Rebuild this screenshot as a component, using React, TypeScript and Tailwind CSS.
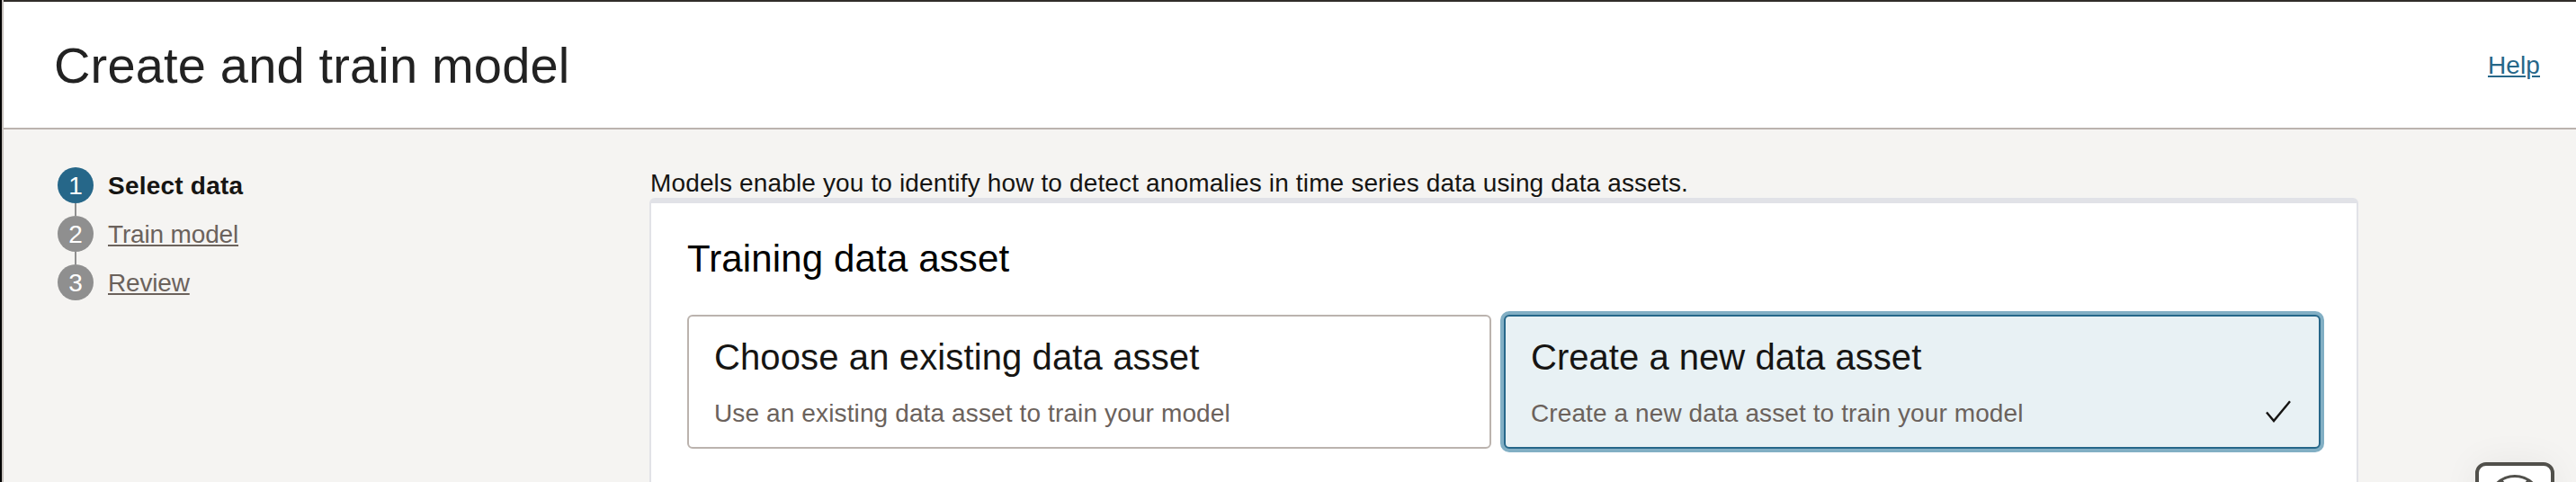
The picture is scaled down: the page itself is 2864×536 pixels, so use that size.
const FONT = "font-['Liberation_Sans',Arial,sans-serif]";

function Steps() {
  return (
    <ol className="ml-[60px] mt-[42px] flex w-[658px] flex-none flex-col text-[28px] leading-[40px]">
      <li className="flex h-[40px] items-center gap-[16px]">
        <span className="flex size-[40px] items-center justify-center rounded-full bg-[#266789] pt-[2px] text-white">1</span>
        <span className="pt-[2px] font-bold tracking-[0.22px] text-[#161513]">Select data</span>
      </li>
      <li className="ml-[19px] h-[14px] w-[2px] bg-[#8f8f8f]" />
      <li className="flex h-[40px] items-center gap-[16px]">
        <span className="flex size-[40px] items-center justify-center rounded-full bg-[#8f8f8f] pt-[2px] text-white">2</span>
        <a className="pt-[2px] tracking-[-0.16px] text-[#6b625c] underline decoration-2 underline-offset-[2px]">Train model</a>
      </li>
      <li className="ml-[19px] h-[14px] w-[2px] bg-[#8f8f8f]" />
      <li className="flex h-[40px] items-center gap-[16px]">
        <span className="flex size-[40px] items-center justify-center rounded-full bg-[#8f8f8f] pt-[2px] text-white">3</span>
        <a className="pt-[2px] tracking-[-0.18px] text-[#6b625c] underline decoration-2 underline-offset-[2px]">Review</a>
      </li>
    </ol>
  );
}

export default function App() {
  return (
    <div className={`flex h-[536px] w-[2864px] overflow-hidden bg-[#f5f4f2] ${FONT}`}>
      <div className="w-[2px] flex-none bg-black" />
      <div className="w-[2px] flex-none bg-[#c4bfbb]" />
      <div className="relative flex min-w-0 flex-1 flex-col">
        <header className="flex h-[144px] flex-none items-center justify-between border-b-2 border-t-2 border-b-[#bbb3ae] border-t-[#312d2a] bg-white pl-[56px] pr-[40px] pt-[2px]">
          <h1 className="text-[56px] leading-[64px] tracking-[0.17px] text-[#222]">Create and train model</h1>
          <a className="text-[28px] leading-[40px] tracking-[0.1px] text-[#266789] underline decoration-2 underline-offset-[2px]">Help</a>
        </header>
        <div className="flex min-h-0 flex-1">
          <Steps />
          <main className="mt-[40px] flex w-[1900px] flex-none flex-col">
            <p className="h-[36px] whitespace-nowrap pl-[1px] text-[28px] leading-[39px] tracking-[0.142px] text-[#161513]">
              Models enable you to identify how to detect anomalies in time series data using data assets.
            </p>
            <section className="flex-1 rounded-t-[6px] border-x-2 border-t-[6px] border-[#e1e2e7] bg-white px-[40px] pt-[36px]">
              <h2 className="text-[42px] leading-[51px] tracking-[0.14px] text-black">Training data asset</h2>
              <div className="mt-[37px] flex gap-[14px]">
                <div className="h-[149px] w-[894px] flex-none rounded-[6px] border-2 border-[#bbb3ae] bg-white pl-[28px] pt-[21px]">
                  <h3 className="text-[40px] leading-[48px] tracking-[0.12px] text-[#161513]">Choose an existing data asset</h3>
                  <p className="mt-[19px] text-[28px] leading-[39px] tracking-[0.125px] text-[#6b625c]">
                    Use an existing data asset to train your model
                  </p>
                </div>
                <div className="flex h-[149px] w-[908px] flex-none justify-between rounded-[6px] border-2 border-[#266789] bg-[#e8f1f4] pl-[28px] pr-[30px] pt-[21px] shadow-[0_0_0_4px_#82afc4]">
                  <div>
                    <h3 className="text-[40px] leading-[48px] tracking-[0.03px] text-[#161513]">Create a new data asset</h3>
                    <p className="mt-[19px] text-[28px] leading-[39px] tracking-[0.1px] text-[#6b625c]">
                      Create a new data asset to train your model
                    </p>
                  </div>
                  <svg className="mt-[71px] size-[32px]" viewBox="0 0 32 32" fill="none" stroke="#161513" strokeWidth="2.4">
                    <path d="M4 14.4 L12 24 L30 2.3" />
                  </svg>
                </div>
              </div>
            </section>
          </main>
        </div>
        <div className="absolute left-[2748px] top-[514px] flex h-[88px] w-[88px] justify-center rounded-[12px] border-[4px] border-[#51504b] bg-white pt-[10px] shadow-[0_0_40px_rgba(0,0,0,0.06)]">
          <svg className="size-[60px]" viewBox="0 0 60 60" fill="none" stroke="#51504b" strokeWidth="3">
            <circle cx="30" cy="30" r="28.5" />
            <circle cx="30" cy="30" r="12" />
            <path d="M15 6 L24 20 M45 6 L36 20 M15 54 L24 40 M45 54 L36 40" />
          </svg>
        </div>
      </div>
    </div>
  );
}
